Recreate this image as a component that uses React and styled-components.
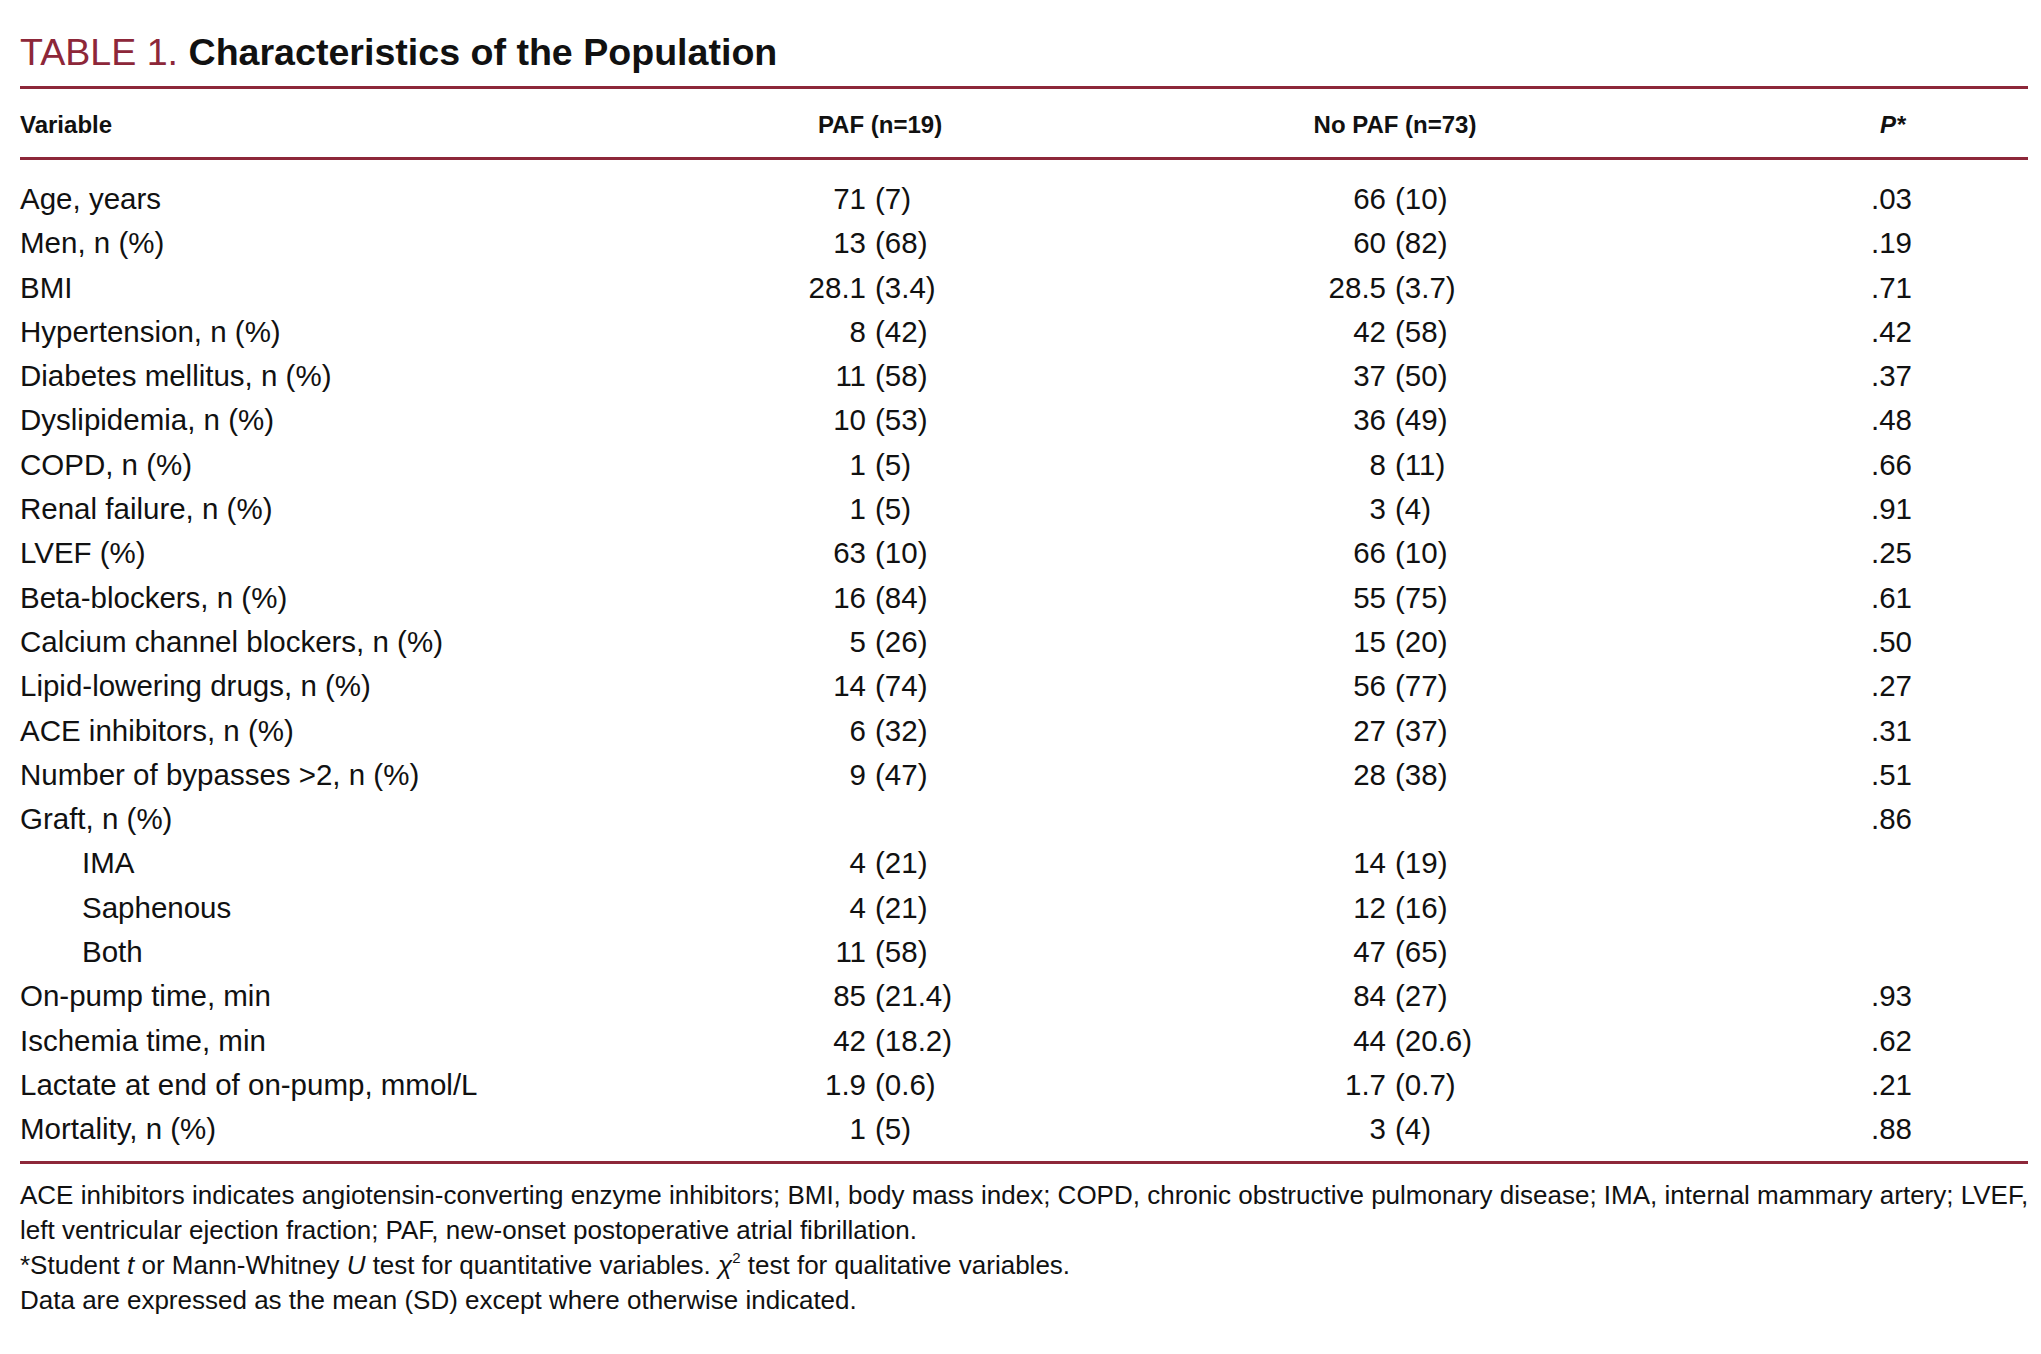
import React from "react";
import styled, { createGlobalStyle } from "styled-components";

const MAROON = "#8d2739";

const GlobalStyle = createGlobalStyle`
  html, body {
    margin: 0;
    padding: 0;
    background: #ffffff;
  }
  body {
    font-family: "Liberation Sans", Arial, sans-serif;
    color: #111111;
  }
`;

const Page = styled.div`
  width: 2041px;
  height: 1354px;
  padding: 30px 13px 0 20px;
  box-sizing: border-box;
`;

const Title = styled.h1`
  margin: 0 0 12px;
  font-size: 37.6px;
  line-height: 44px;
  font-weight: 700;
  color: #111;
  white-space: nowrap;
`;

const Label = styled.span`
  color: ${MAROON};
  font-weight: 400;
`;

const Rule = styled.div`
  height: 3px;
  background: ${MAROON};
`;

const COLS = "600px 520px 510px 378px";

const HeadRow = styled.div`
  display: grid;
  grid-template-columns: ${COLS};
  padding: 21px 0 17px;
  font-size: 24px;
  line-height: 30px;
  font-weight: 700;
`;

const HeadCell = styled.div`
  text-align: ${(p) => p.$align || "center"};
  padding-left: ${(p) => p.$pad || 0}px;
  font-style: ${(p) => (p.$italic ? "italic" : "normal")};
`;

const Body = styled.div`
  padding: 17px 0 9px;
`;

const Row = styled.div`
  display: grid;
  grid-template-columns: ${COLS};
  height: 44.3px;
  font-size: 29.5px;
  line-height: 44.3px;
  white-space: nowrap;
`;

const VarCell = styled.div`
  padding-left: ${(p) => (p.$indent ? 62 : 0)}px;
`;

const ValueCell = styled.div`
  display: grid;
  grid-template-columns: 246px auto;
  column-gap: 9px;
`;

const Num = styled.span`
  text-align: right;
`;

const PCell = styled.div`
  padding-left: 221px;
`;

const Notes = styled.div`
  margin-top: 14px;
  font-size: 26px;
  line-height: 35.3px;
  white-space: nowrap;
`;

const NoteLine = styled.div``;

const Sup = styled.sup`
  font-size: 15px;
  line-height: 0;
  vertical-align: 11px;
`;

const rows = [
  ["Age, years", "71|(7)", "66|(10)", ".03"],
  ["Men, n (%)", "13|(68)", "60|(82)", ".19"],
  ["BMI", "28.1|(3.4)", "28.5|(3.7)", ".71"],
  ["Hypertension, n (%)", "8|(42)", "42|(58)", ".42"],
  ["Diabetes mellitus, n (%)", "11|(58)", "37|(50)", ".37"],
  ["Dyslipidemia, n (%)", "10|(53)", "36|(49)", ".48"],
  ["COPD, n (%)", "1|(5)", "8|(11)", ".66"],
  ["Renal failure, n (%)", "1|(5)", "3|(4)", ".91"],
  ["LVEF (%)", "63|(10)", "66|(10)", ".25"],
  ["Beta-blockers, n (%)", "16|(84)", "55|(75)", ".61"],
  ["Calcium channel blockers, n (%)", "5|(26)", "15|(20)", ".50"],
  ["Lipid-lowering drugs, n (%)", "14|(74)", "56|(77)", ".27"],
  ["ACE inhibitors, n (%)", "6|(32)", "27|(37)", ".31"],
  ["Number of bypasses >2, n (%)", "9|(47)", "28|(38)", ".51"],
  ["Graft, n (%)", "", "", ".86"],
  ["IMA", "4|(21)", "14|(19)", "", true],
  ["Saphenous", "4|(21)", "12|(16)", "", true],
  ["Both", "11|(58)", "47|(65)", "", true],
  ["On-pump time, min", "85|(21.4)", "84|(27)", ".93"],
  ["Ischemia time, min", "42|(18.2)", "44|(20.6)", ".62"],
  ["Lactate at end of on-pump, mmol/L", "1.9|(0.6)", "1.7|(0.7)", ".21"],
  ["Mortality, n (%)", "1|(5)", "3|(4)", ".88"],
];

const Value = ({ v }) => {
  if (!v) return <div />;
  const [n, sd] = v.split("|");
  return (
    <ValueCell>
      <Num>{n}</Num>
      <span>{sd}</span>
    </ValueCell>
  );
};

export default function App() {
  return (
    <>
      <GlobalStyle />
      <Page>
        <Title>
          <Label>TABLE 1.</Label> Characteristics of the Population
        </Title>
        <Rule />
        <HeadRow>
          <HeadCell $align="left">Variable</HeadCell>
          <HeadCell>PAF (n=19)</HeadCell>
          <HeadCell>No PAF (n=73)</HeadCell>
          <HeadCell $align="left" $pad={230} $italic>
            P*
          </HeadCell>
        </HeadRow>
        <Rule />
        <Body>
          {rows.map(([name, paf, nopaf, p, indent]) => (
            <Row key={name}>
              <VarCell $indent={indent}>{name}</VarCell>
              <Value v={paf} />
              <Value v={nopaf} />
              <PCell>{p}</PCell>
            </Row>
          ))}
        </Body>
        <Rule />
        <Notes>
          <NoteLine>
            ACE inhibitors indicates angiotensin-converting enzyme inhibitors; BMI, body mass index; COPD, chronic
            obstructive pulmonary disease; IMA, internal mammary artery; LVEF,
          </NoteLine>
          <NoteLine>left ventricular ejection fraction; PAF, new-onset postoperative atrial fibrillation.</NoteLine>
          <NoteLine>
            *Student <i>t</i> or Mann-Whitney <i>U</i> test for quantitative variables. <i>χ</i>
            <Sup>2</Sup> test for qualitative variables.
          </NoteLine>
          <NoteLine>Data are expressed as the mean (SD) except where otherwise indicated.</NoteLine>
        </Notes>
      </Page>
    </>
  );
}
